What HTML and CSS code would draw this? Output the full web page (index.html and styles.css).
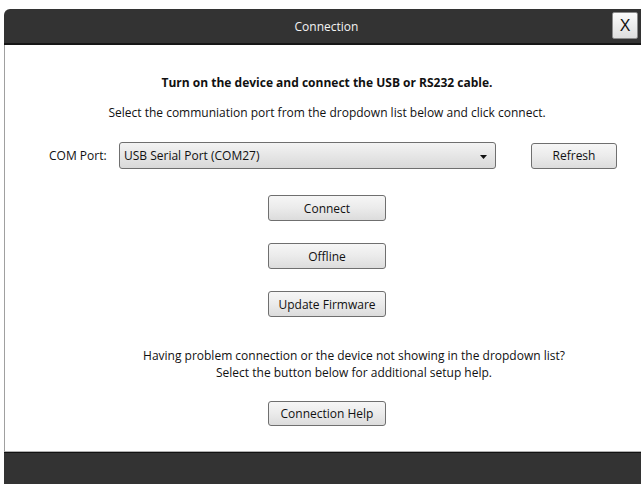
FILE: index.html
```html
<!DOCTYPE html>
<html>
<head>
<meta charset="utf-8">
<title>Connection</title>
<link rel="stylesheet" href="styles.css">
</head>
<body>
<div class="window">
  <div class="titlebar">
    <span class="spacer"></span>
    <span class="title">Connection</span>
    <button class="close">X</button>
  </div>
  <div class="content">
    <p class="headline">Turn on the device and connect the USB or RS232 cable.</p>
    <p class="instruction">Select the communiation port from the dropdown list below and click connect.</p>
    <div class="port-row">
      <span class="port-label">COM Port:</span>
      <div class="combo">
        <span class="combo-value">USB Serial Port (COM27)</span>
        <svg class="combo-arrow" width="7" height="4" viewBox="0 0 7 4"><path d="M0 0h7L3.5 4z" fill="#111"/></svg>
      </div>
      <button class="btn refresh">Refresh</button>
    </div>
    <div class="actions">
      <button class="btn action">Connect</button>
      <button class="btn action">Offline</button>
      <button class="btn action">Update Firmware</button>
    </div>
    <p class="help-text">Having problem connection or the device not showing in the dropdown list?<br>Select the button below for additional setup help.</p>
    <button class="btn action help">Connection Help</button>
  </div>
  <div class="footer"></div>
</div>
</body>
</html>
```

FILE: styles.css
```css
html, body {
  margin: 0;
  padding: 0;
  background: #ffffff;
  overflow: hidden;
}

body {
  font-family: "Open Sans", "Noto Sans", sans-serif;
  font-size: 12px;
  color: #111111;
}

/* dialog frame; its right edge runs past the viewport */
.window {
  margin: 9px 0 0 4px;
  width: 645px;
  height: 475px;
  display: flex;
  flex-direction: column;
}

.titlebar {
  height: 34px;
  flex: none;
  background: #333333;
  border-bottom: 2px solid #161616;
  border-top-left-radius: 6px;
  display: grid;
  grid-template-columns: 1fr auto 1fr;
  align-items: center;
}

.title {
  color: #f4f4f4;
  font-size: 12px;
}

.close {
  justify-self: end;
  margin: 0 11px 1px 0;
  width: 26px;
  height: 27px;
  padding: 0;
  border: 1px solid #8a8a8a;
  border-radius: 2px;
  background: linear-gradient(#fbfbfb, #dedede);
  font-family: "Liberation Sans", sans-serif;
  font-size: 16px;
  color: #111;
}

.content {
  flex: none;
  height: 406px;
  background: #ffffff;
  border-left: 1px solid #a0a0a0;
  border-bottom: 1px solid #b0b0b0;
  display: flex;
  flex-direction: column;
  align-items: center;
}

.headline {
  margin: 29px 0 0 0;
  font-weight: 700;
  line-height: 17px;
}

.instruction {
  margin: 13px 0 0 0;
  line-height: 17px;
}

.port-row {
  align-self: stretch;
  display: flex;
  align-items: center;
  margin-top: 21px;
  padding-left: 44px;
}

.port-label {
  width: 70px;
}

.combo {
  width: 377px;
  height: 27px;
  box-sizing: border-box;
  border: 1px solid #6f6f6f;
  border-radius: 3px;
  background: linear-gradient(#f3f3f3, #e6e6e6 50%, #d9d9d9);
  display: flex;
  align-items: center;
  justify-content: space-between;
  padding: 0 8px 0 4px;
}

.combo-arrow {
  margin-top: 2px;
}

.btn {
  height: 26px;
  box-sizing: border-box;
  border: 1px solid #6f6f6f;
  border-radius: 3px;
  background: linear-gradient(#f6f6f6, #ebebeb 50%, #dcdcdc);
  font-family: inherit;
  font-size: 12px;
  color: #111;
  padding: 0;
}

.refresh {
  width: 86px;
  margin-left: 35px;
}

.actions {
  display: flex;
  flex-direction: column;
  gap: 22px;
  margin-top: 26px;
}

.action {
  width: 118px;
  height: 26px;
}

.help-text {
  margin: 30px 0 0 0;
  padding-left: 54px;
  text-align: center;
  line-height: 17px;
}

.help {
  margin-top: 20px;
  height: 25px;
}

.footer {
  flex: 1;
  background: #333333;
  border-top: 1px solid #111111;
}
```
